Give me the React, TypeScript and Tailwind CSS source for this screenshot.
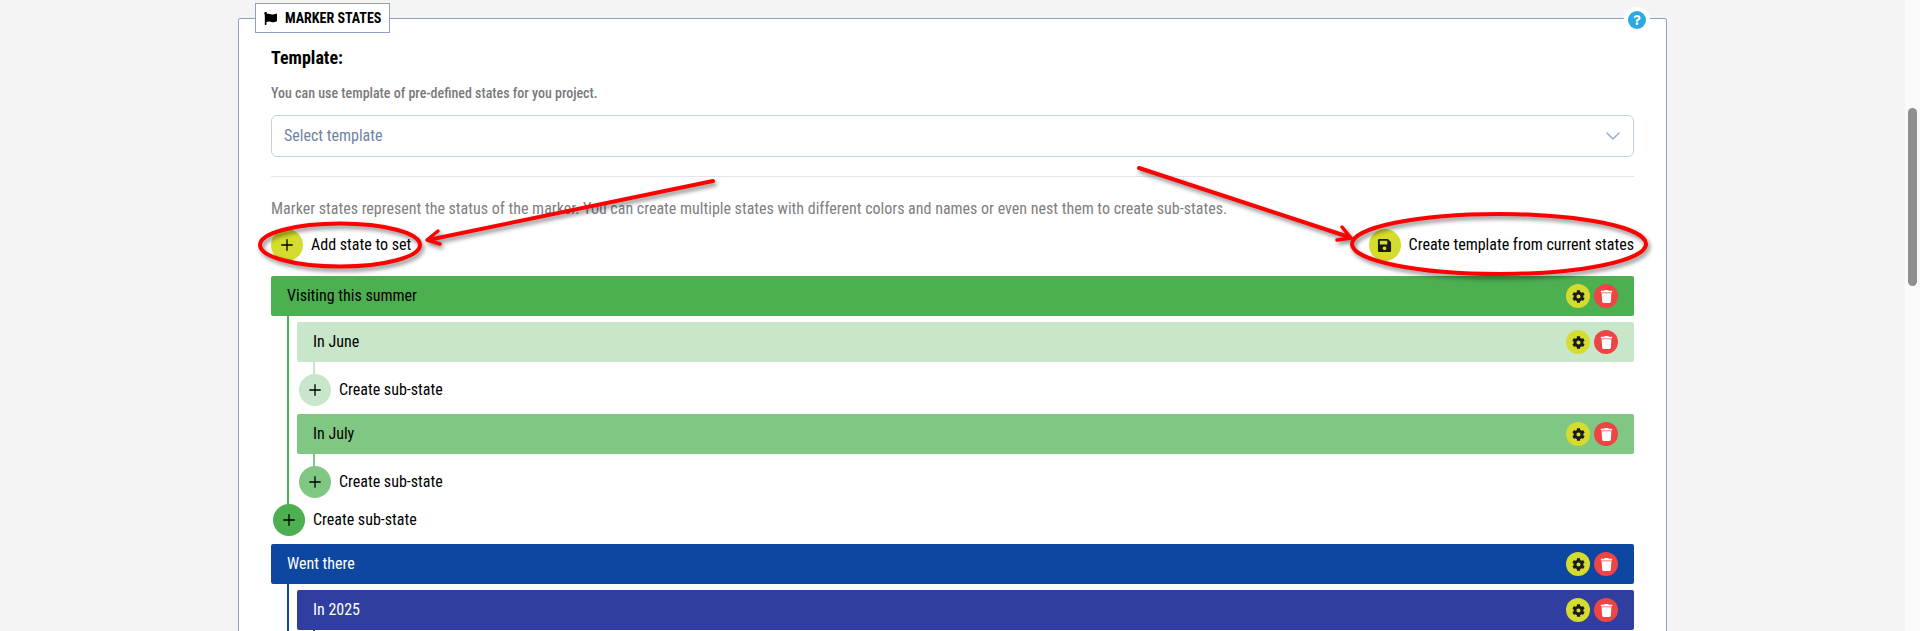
// Marker states panel: template picker and nested state list with red annotations on top.
import { ChevronDown, Plus } from 'lucide-react'
import { FaCog, FaFlag, FaQuestion, FaSave, FaTrash } from 'react-icons/fa'

// ─── State rows ──────────────────────────────────────────────────────────────

function StateBar({ label, className }: { label: string; className: string }) {
  return (
    <div className={`flex h-10 items-center justify-between rounded-[2px] pr-4 pl-4 ${className}`}>
      <span>{label}</span>
      <div className="flex gap-1">
        <button className="flex size-6 items-center justify-center rounded-full bg-[#d4dc2d] text-[#1a1a1a]">
          <FaCog size={13} />
        </button>
        <button className="flex size-6 items-center justify-center rounded-full bg-[#ef4444] text-white">
          <FaTrash size={13} />
        </button>
      </div>
    </div>
  )
}

function AddButton({ label, className }: { label: string; className: string }) {
  return (
    <div className="flex items-center gap-2">
      <button className={`flex size-8 items-center justify-center rounded-full text-black ${className}`}>
        <Plus size={18} strokeWidth={1.75} />
      </button>
      <span className="text-black">{label}</span>
    </div>
  )
}

// Sub-state: bar, short connector line, then its own add button
function SubState({
  label,
  barClass,
  lineClass,
  circleClass,
}: {
  label: string
  barClass: string
  lineClass: string
  circleClass: string
}) {
  return (
    <div>
      <StateBar label={label} className={barClass} />
      <div className={`ml-4 h-3 w-0.5 ${lineClass}`} />
      <div className="ml-0.5">
        <AddButton label="Create sub-state" className={circleClass} />
      </div>
    </div>
  )
}

// ─── Annotations drawn over the screenshot ───────────────────────────────────

function Annotations() {
  return (
    <svg
      className="pointer-events-none absolute top-0 left-0 h-[631px] w-[1920px] drop-shadow-[2px_3px_2px_rgba(0,0,0,0.45)]"
      viewBox="0 0 1920 631"
      fill="none"
      stroke="#ff0000"
      strokeLinecap="round"
      strokeLinejoin="round"
    >
      <ellipse cx="340" cy="245" rx="80" ry="21.5" strokeWidth="4" />
      <ellipse cx="1499" cy="244" rx="147" ry="30" strokeWidth="4" />
      <path d="M713 181 L428 240" strokeWidth="4" />
      <path d="M438 231 L427 240 L440 244" strokeWidth="3.5" />
      <path d="M1139 168 L1349 237" strokeWidth="4" />
      <path d="M1342 227 L1351 238 L1337 240" strokeWidth="3.5" />
    </svg>
  )
}

export default function App() {
  return (
    <div className="relative flex h-[631px] overflow-hidden bg-[#f4f4f4] font-['Roboto',sans-serif] text-[16px] text-black [font-stretch:75%]">
      <main className="flex-1 pt-[18px] pl-[238px]">
        <section className="relative w-[1429px] rounded-t-[2px] border border-[#8fa0c0] bg-white px-8 pt-[25px] pb-10">
          {/* Legend sitting on the panel border */}
          <div className="absolute -top-[16px] left-4 flex h-[30px] w-[135px] items-center gap-2 border border-[#8fa0c0] bg-white pl-2 text-[14px] font-bold">
            <FaFlag size={13} />
            <span>MARKER STATES</span>
          </div>
          {/* Help button */}
          <div className="absolute -top-[12px] right-[16px] flex size-[26px] items-center justify-center rounded-full bg-white">
            <div className="flex size-[18px] items-center justify-center rounded-full bg-[#29abe2] text-white">
              <FaQuestion size={10} />
            </div>
          </div>

          <h3 className="text-[18px] leading-7 font-bold">Template:</h3>
          <p className="mt-[9px] text-[14px] leading-6 font-medium text-[#7a7a7a]">
            You can use template of pre-defined states for you project.
          </p>
          <div className="mt-[10px] flex h-[42px] items-center justify-between rounded-md border border-[#c5d1e3] pr-2 pl-3 text-[#6f83a3]">
            <span>Select template</span>
            <ChevronDown size={24} strokeWidth={1.5} className="text-[#a0aec0]" />
          </div>
          <hr className="mt-[19px] border-[#e2e5ea]" />

          <p className="mt-5 leading-6 text-[#808080]">
            Marker states represent the status of the marker. You can create multiple states with different colors and
            names or even nest them to create sub-states.
          </p>
          <div className="mt-2 flex items-center justify-between">
            <AddButton label="Add state to set" className="bg-[#d4dc2d]" />
            <div className="flex items-center gap-2">
              <button className="flex size-8 items-center justify-center rounded-full bg-[#d4dc2d] text-[#1a1a1a]">
                <FaSave size={15} />
              </button>
              <span>Create template from current states</span>
            </div>
          </div>

          {/* State tree */}
          <div className="mt-[15px]">
            <StateBar label="Visiting this summer" className="bg-[#4caf50] text-black" />
            <div className="ml-4 flex flex-col gap-2 border-l-2 border-[#4caf50] pt-1.5 pb-1.5 pl-2">
              <SubState
                label="In June"
                barClass="bg-[#c8e6c9] text-black"
                lineClass="bg-[#c8e6c9]"
                circleClass="bg-[#c8e6c9]"
              />
              <SubState
                label="In July"
                barClass="bg-[#81c784] text-black"
                lineClass="bg-[#81c784]"
                circleClass="bg-[#81c784]"
              />
            </div>
            <div className="ml-0.5">
              <AddButton label="Create sub-state" className="bg-[#4caf50]" />
            </div>

            <div className="mt-2">
              <StateBar label="Went there" className="bg-[#0d47a1] text-white" />
              <div className="ml-4 border-l-2 border-[#0d47a1] pt-1.5 pl-2">
                <StateBar label="In 2025" className="bg-[#303f9f] text-white" />
                <div className="ml-4 h-3 w-0.5 bg-[#303f9f]" />
              </div>
            </div>
          </div>
        </section>
      </main>

      {/* Scrollbar */}
      <div className="w-[15px] shrink-0 bg-[#fafafa] pt-[108px] pl-[3px]">
        <div className="h-[178px] w-[9px] rounded-full bg-[#8f8f8f]" />
      </div>

      <Annotations />
    </div>
  )
}
